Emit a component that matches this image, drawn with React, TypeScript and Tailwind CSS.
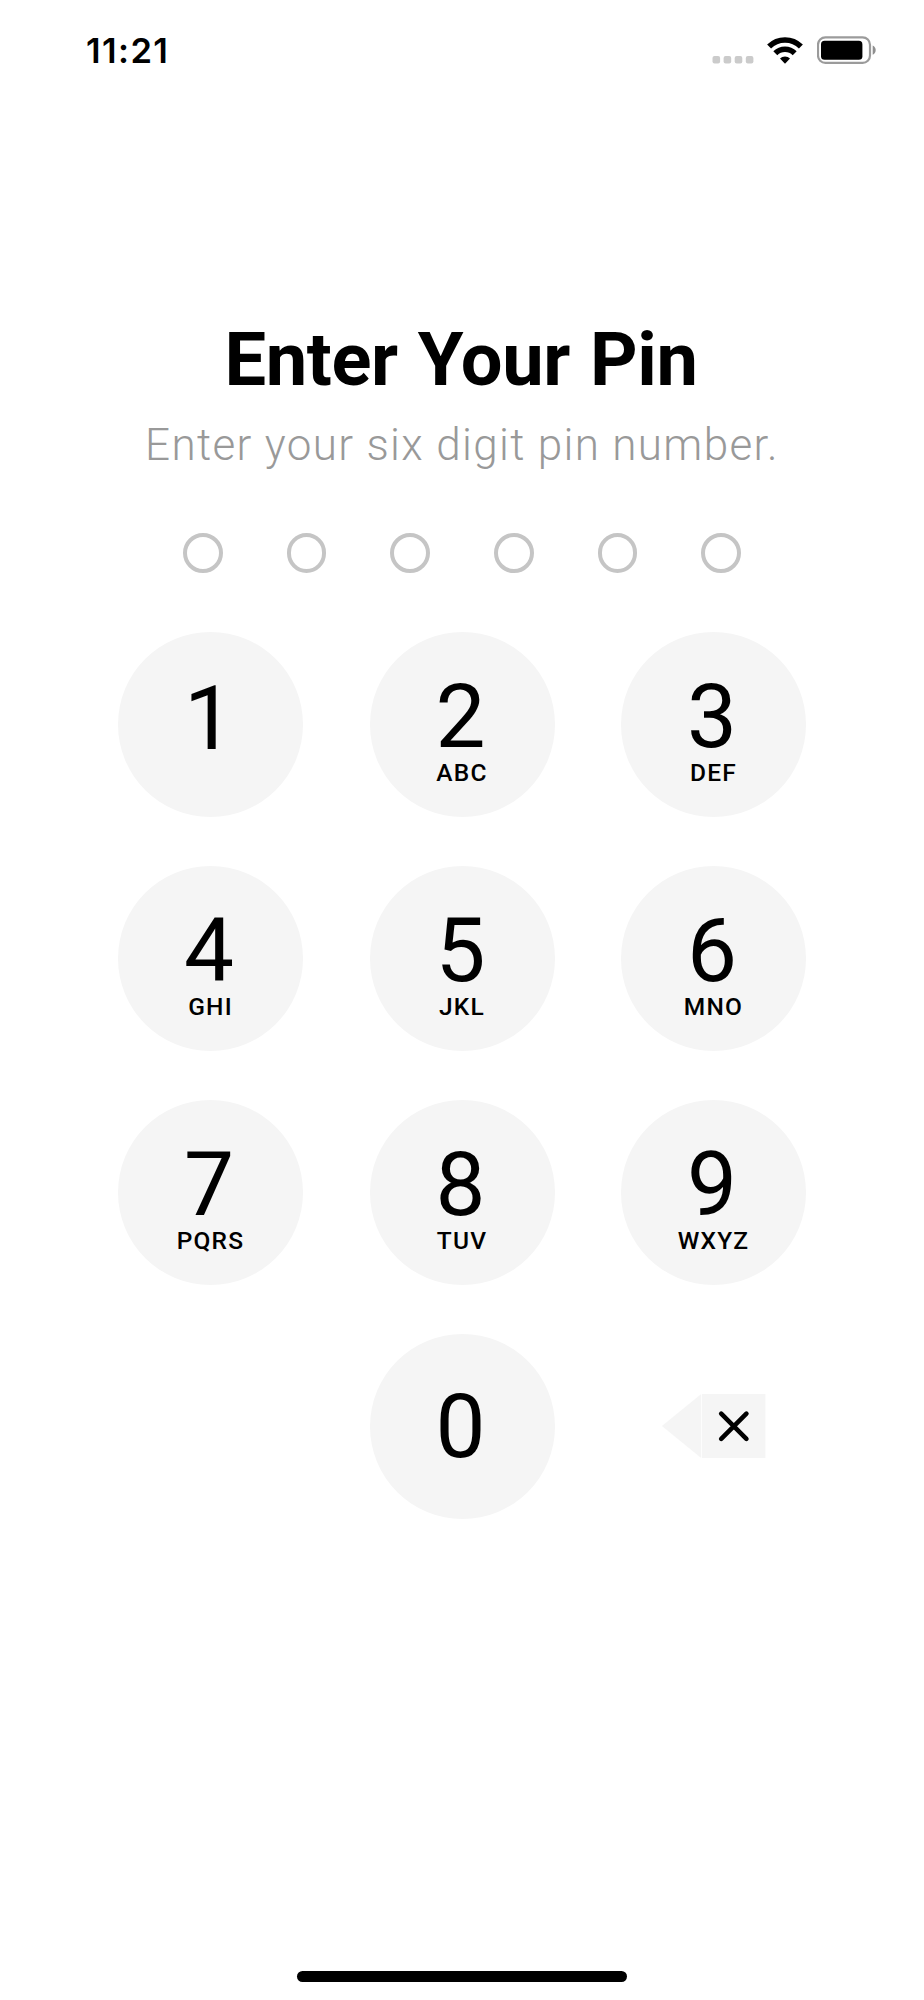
import { useState } from "react";

interface KeyItem {
  digit: string;
  letters?: string;
}

const PIN_LENGTH = 6;

const KEYS: KeyItem[] = [
  { digit: "1" },
  { digit: "2", letters: "ABC" },
  { digit: "3", letters: "DEF" },
  { digit: "4", letters: "GHI" },
  { digit: "5", letters: "JKL" },
  { digit: "6", letters: "MNO" },
  { digit: "7", letters: "PQRS" },
  { digit: "8", letters: "TUV" },
  { digit: "9", letters: "WXYZ" },
];

function CellularDots() {
  return (
    <svg width="42" height="8" viewBox="0 0 42 8" fill="#cbcbcb">
      <rect x="0.5" width="7.6" height="7.6" rx="2" />
      <rect x="11.6" width="7.6" height="7.6" rx="2" />
      <rect x="22.7" width="7.6" height="7.6" rx="2" />
      <rect x="33.8" width="7.6" height="7.6" rx="2" />
    </svg>
  );
}

function WifiIcon() {
  return (
    <svg width="36" height="27" viewBox="0 0 36 27" fill="none" stroke="#000" strokeWidth="5.6">
      <path d="M2.1 9.5a22.6 22.6 0 0 1 31.8 0" />
      <path d="M8.3 16.2a13.8 13.8 0 0 1 19.4 0" />
      <path d="M18 26.8l-5-5.2a7 7 0 0 1 10 0z" fill="#000" stroke="none" />
    </svg>
  );
}

function BatteryIcon() {
  return (
    <svg width="60" height="28" viewBox="0 0 60 28">
      <rect x="1" y="1.3" width="52" height="25.6" rx="7.4" fill="none" stroke="#9b9b9b" strokeWidth="2.2" />
      <rect x="4" y="4.8" width="41.4" height="19" rx="3.6" />
      <path d="M55.7 9.6c4 1.6 4 7.6 0 9.2z" fill="#8f8f8f" />
    </svg>
  );
}

function StatusBar() {
  return (
    <div className="flex h-[100px] items-start justify-between pl-[86px] pr-[47px] pt-9">
      <span className="font-[Inter,sans-serif] text-[34.5px] font-semibold leading-[29px] tracking-[1.4px]">11:21</span>
      <div className="flex items-start">
        <div className="pt-5">
          <CellularDots />
        </div>
        <div className="ml-[13px] pt-[0.5px]">
          <WifiIcon />
        </div>
        <div className="ml-[14px]">
          <BatteryIcon />
        </div>
      </div>
    </div>
  );
}

function KeyButton({ digit, letters, onPress }: KeyItem & { onPress: (digit: string) => void }) {
  return (
    <button
      type="button"
      onClick={() => onPress(digit)}
      className={`flex size-[185px] flex-col items-center rounded-full bg-[#f5f5f5] ${
        digit === "0" ? "pt-[48px]" : letters ? "pt-[40px]" : "pt-[42px]"
      }`}
    >
      <span className="pr-[3px] text-[89px] leading-[90px]">{digit}</span>
      {letters && <span className="-mt-px text-[24.5px] font-medium leading-6 tracking-[1.2px]">{letters}</span>}
    </button>
  );
}

function BackspaceIcon() {
  return (
    <svg width="104" height="64" viewBox="0 0 104 64">
      <path d="M0 32L39.2 0v64z" fill="#f5f5f5" />
      <rect x="40" width="63.4" height="64" fill="#f5f5f5" />
      <path d="M59.2 19.7l25.2 25.2m0-25.2L59.2 44.9" stroke="#000" strokeWidth="4.6" strokeLinecap="round" />
    </svg>
  );
}

export default function App() {
  const [pin, setPin] = useState("");

  const handlePress = (digit: string) => {
    setPin((current) => (current.length < PIN_LENGTH ? current + digit : current));
  };

  return (
    <div className="flex h-[2000px] w-[924px] flex-col bg-white font-[Roboto,sans-serif] text-black">
      <StatusBar />

      <main className="flex flex-1 flex-col items-center pt-[216px]">
        <h1 className="whitespace-nowrap pr-0.5 text-[74px] font-bold leading-[88px] tracking-[-0.4px] [word-spacing:2px]">
          Enter Your Pin
        </h1>
        <p className="mt-[15px] whitespace-nowrap text-[44px] font-light leading-[52px] tracking-[1.34px] text-[#999]">
          Enter your six digit pin number.
        </p>

        <div className="mt-[62.3px] flex gap-[64.2px]">
          {Array.from({ length: PIN_LENGTH }, (_, i) => (
            <span
              key={i}
              className={`size-[39.5px] rounded-full border-4 border-[#c5c5c5] ${i < pin.length ? "bg-[#c5c5c5]" : ""}`}
            />
          ))}
        </div>

        <div className="mt-[59.2px] grid grid-cols-3 gap-x-[66.5px] gap-y-[49px]">
          {KEYS.map((key) => (
            <KeyButton key={key.digit} {...key} onPress={handlePress} />
          ))}
          <span />
          <KeyButton digit="0" onPress={handlePress} />
          <button
            type="button"
            aria-label="Delete"
            onClick={() => setPin((current) => current.slice(0, -1))}
            className="flex items-center justify-center pl-px"
          >
            <BackspaceIcon />
          </button>
        </div>
      </main>

      <div className="mx-auto mb-[18px] h-[11px] w-[330px] rounded-full bg-black" />
    </div>
  );
}
